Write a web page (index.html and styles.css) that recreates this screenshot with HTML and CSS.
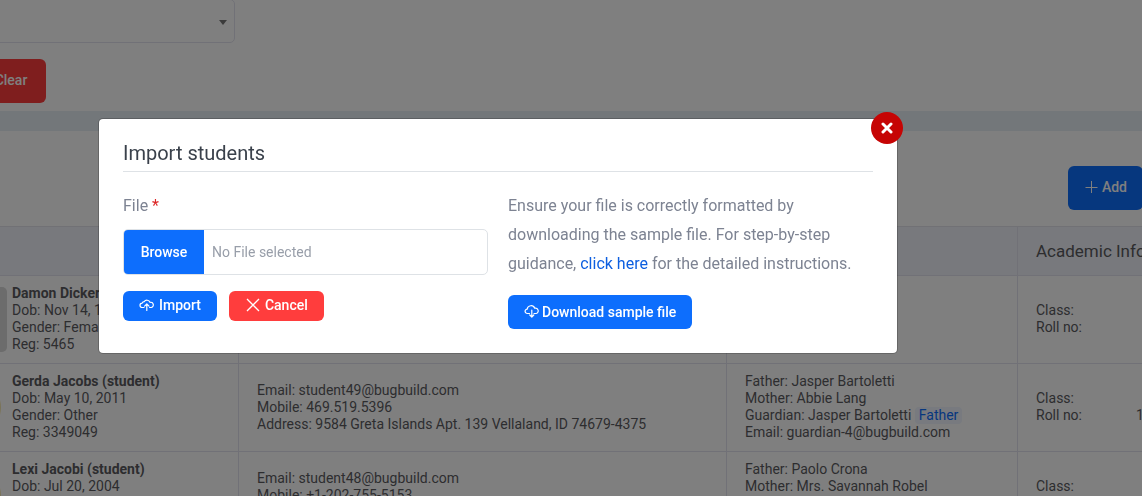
FILE: index.html
```html
<!DOCTYPE html>
<html lang="en">
<head>
    <meta charset="UTF-8">
    <meta name="viewport" content="width=device-width, initial-scale=1.0">
    <title>Students</title>
    <link rel="stylesheet" href="styles.css">
</head>
<body>
    <div class="page">
        <form class="filters">
            <div class="select-wrap">
                <select class="filter-select" aria-label="Filter">
                    <option></option>
                </select>
            </div>
            <button type="reset" class="btn btn-danger btn-clear">Clear</button>
        </form>

        <div class="card">
            <div class="toolbar">
                <button type="button" class="btn btn-primary btn-add">
                    <svg width="16" height="14" viewBox="0 0 16 14" fill="none" stroke="currentColor"><path d="M7.5 1v12M1.500 7.500h12"/></svg>
                    Add
                </button>
            </div>

            <table class="students">
                <colgroup>
                    <col class="col-student">
                    <col class="col-contact">
                    <col class="col-guardian">
                    <col>
                </colgroup>
                <thead>
                    <tr>
                        <th></th>
                        <th></th>
                        <th></th>
                        <th>Academic Info</th>
                    </tr>
                </thead>
                <tbody>
                    <tr>
                        <td>
                            <div class="student">
                                <span class="avatar avatar-square"></span>
                                <div><b>Damon Dicker</b><br>Dob: Nov 14, 1<br>Gender: Fema<br>Reg: 5465</div>
                            </div>
                        </td>
                        <td></td>
                        <td></td>
                        <td>
                            <dl class="academic"><dt>Class:</dt><dd></dd><dt>Roll no:</dt><dd></dd></dl>
                        </td>
                    </tr>
                    <tr>
                        <td>
                            <div class="student">
                                <span class="avatar"></span>
                                <div><b>Gerda Jacobs (student)</b><br>Dob: May 10, 2011<br>Gender: Other<br>Reg: 3349049</div>
                            </div>
                        </td>
                        <td>Email: student49@bugbuild.com<br>Mobile: 469.519.5396<br>Address: 9584 Greta Islands Apt. 139 Vellaland, ID 74679-4375</td>
                        <td>Father: Jasper Bartoletti<br>Mother: Abbie Lang<br>Guardian: Jasper Bartoletti <span class="badge">Father</span><br>Email: guardian-4@bugbuild.com</td>
                        <td>
                            <dl class="academic"><dt>Class:</dt><dd></dd><dt>Roll no:</dt><dd>1</dd></dl>
                        </td>
                    </tr>
                    <tr>
                        <td>
                            <div class="student">
                                <span class="avatar"></span>
                                <div><b>Lexi Jacobi (student)</b><br>Dob: Jul 20, 2004<br><br><br></div>
                            </div>
                        </td>
                        <td>Email: student48@bugbuild.com<br>Mobile: +1-202-755-5153<br><br></td>
                        <td>Father: Paolo Crona<br>Mother: Mrs. Savannah Robel<br><br><br></td>
                        <td>
                            <dl class="academic"><dt>Class:</dt><dd></dd><dt></dt><dd></dd></dl>
                        </td>
                    </tr>
                </tbody>
            </table>
        </div>
    </div>

    <div class="backdrop">
        <div class="modal" role="dialog" aria-labelledby="modalTitle">
            <button type="button" class="modal-close" aria-label="Close">
                <svg width="12" height="12" viewBox="0 0 12 12" fill="none" stroke="currentColor" stroke-width="3" stroke-linecap="round"><path d="M2 2l8 8M10 2l-8 8"/></svg>
            </button>
            <h1 class="modal-title" id="modalTitle">Import students</h1>
            <div class="modal-body">
                <form class="import-form">
                    <label class="field-label" for="importFile">File <span class="required">*</span></label>
                    <div class="file-box">
                        <span class="file-browse">Browse</span>
                        <span class="file-name">No File selected</span>
                        <input type="file" id="importFile" class="file-input">
                    </div>
                    <div class="actions">
                        <button type="submit" class="btn btn-primary btn-sm">
                            <svg width="16" height="14" viewBox="0 0 16 14" fill="none" stroke="currentColor" stroke-width="1.2" stroke-linecap="round" stroke-linejoin="round"><path d="M5 9.500H3.200A2.200 2.200 0 0 1 3.200 5.100 2.300 2.300 0 0 1 5.200 3.600 3.300 3.300 0 0 1 11 4.400 2.600 2.600 0 0 1 12.400 9.500H10.600M7.800 12.500V6.200M5.600 8.200L7.800 6l2.200 2.200"/></svg>
                            Import
                        </button>
                        <button type="button" class="btn btn-danger btn-sm">
                            <svg width="16" height="14" viewBox="0 0 16 14" fill="none" stroke="currentColor" stroke-width="1.3"><path d="M2 1l12 12M14 1L2 13"/></svg>
                            Cancel
                        </button>
                    </div>
                </form>
                <div class="help">
                    <p class="help-text">Ensure your file is correctly formatted by downloading the sample file. For step-by-step guidance, <a href="#">click here</a> for the detailed instructions.</p>
                    <button type="button" class="btn btn-primary btn-download">
                        <svg width="16" height="14" viewBox="0 0 16 14" fill="none" stroke="currentColor" stroke-width="1.2" stroke-linecap="round" stroke-linejoin="round"><path d="M5.500 8.500H3.400A2.200 2.200 0 0 1 3.200 4.100 3.900 3.900 0 0 1 10.700 3.200 2.700 2.700 0 0 1 12.200 8.500H10M7.800 5V11.500M5.800 10L7.800 12l2-2"/></svg>
                        Download sample file
                    </button>
                </div>
            </div>
        </div>
    </div>
</body>
</html>
```
FILE: styles.css
```css
* {
    box-sizing: border-box;
}
body {
    margin: 0;
    font-family: Roboto, sans-serif;
    font-size: 14px;
    line-height: 17px;
    color: #5b5b5f;
    background-color: #e6eef4;
    overflow: hidden;
}
.page {
    height: 100vh;
    margin: 0 -100px 0 -96px;
    overflow: hidden;
}
.filters {
    display: flex;
    flex-direction: column;
    align-items: flex-start;
    gap: 16px;
    margin-top: -1px;
    padding: 0 72px 8px;
    background: white;
}
.select-wrap {
    position: relative;
    width: 259px;
}
.select-wrap::after {
    content: "";
    position: absolute;
    top: 21px;
    right: 8px;
    border: 4px solid transparent;
    border-top: 5px solid #777;
    border-bottom: 0;
    pointer-events: none;
}
.filter-select {
    display: block;
    appearance: none;
    width: 100%;
    height: 44px;
    background: white;
    border: 1px solid #e3e3ee;
    border-radius: 5px;
}
.btn {
    display: inline-flex;
    align-items: center;
    justify-content: center;
    height: 44px;
    padding: 0 16px 2px;
    border: none;
    border-radius: 6px;
    font-family: inherit;
    font-size: 14px;
    font-weight: 500;
    color: white;
    cursor: pointer;
}
.btn-primary {
    background-color: #0d6efd;
}
.btn-danger {
    background-color: #ff3d3d;
}
.btn-clear {
    width: 70px;
}
.btn-add {
    gap: 2px;
}
.btn-sm {
    height: 30px;
    gap: 4px;
}
.btn-download {
    height: 34px;
    gap: 2px;
    padding-bottom: 0;
}
.card {
    margin-top: 20px;
    background: white;
}
.toolbar {
    display: flex;
    justify-content: flex-end;
    padding: 35px 99px 16px;
}
.students {
    width: 100%;
    table-layout: fixed;
    border-collapse: separate;
    border-spacing: 0;
    border-top: 1px solid #e3e3ea;
}
.col-student {
    width: 335px;
}
.col-contact {
    width: 488px;
}
.col-guardian {
    width: 291px;
}
.students th,
.students td {
    border-right: 1px solid #e3e3ee;
    border-bottom: 1px solid #e3e3ee;
    text-align: left;
    vertical-align: middle;
}
.students th {
    height: 49px;
    padding: 0 18px;
    background-color: #f0f3fa;
    font-size: 17px;
    font-weight: 400;
    white-space: nowrap;
}
.students td {
    height: 88px;
    padding: 9px 18px 10px;
}
.student {
    display: flex;
    align-items: center;
    gap: 5px;
    margin-left: 20px;
    white-space: nowrap;
}
.avatar {
    width: 65px;
    height: 65px;
    border: 6px solid white;
    border-radius: 50%;
    background-color: #f5e8b0;
}
.avatar-square {
    border: none;
    border-radius: 5px;
    background-color: #d8d8d8;
}
.badge {
    display: inline-block;
    padding: 0 4px;
    border-radius: 4px;
    background-color: #f0f5ff;
    color: #0d6efd;
}
.academic {
    display: grid;
    grid-template-columns: 100px 1fr;
    grid-auto-rows: 17px;
    margin: 0;
}
.academic dd {
    margin: 0;
}
.backdrop {
    position: fixed;
    inset: 0;
    padding: 118px 244px 0 98px;
    background-color: rgba(0, 0, 0, 0.5);
}
.modal {
    position: relative;
    padding: 22px 24px 24px;
    background: white;
    background-clip: padding-box;
    border: 1px solid rgba(0, 0, 0, 0.2);
    border-radius: 5px;
}
.modal-close {
    position: absolute;
    top: -7px;
    right: -6px;
    display: flex;
    align-items: center;
    justify-content: center;
    width: 32px;
    height: 32px;
    padding: 0;
    border: none;
    border-radius: 50%;
    background-color: #c60404;
    color: white;
    cursor: pointer;
}
.modal-title {
    margin: 0 0 19px;
    padding-bottom: 6px;
    border-bottom: 1px solid #dee2e6;
    font-size: 20px;
    font-weight: 400;
    line-height: 24px;
    color: #3a414b;
}
.modal-body {
    display: grid;
    grid-template-columns: 1fr 1fr;
    gap: 20px;
    font-size: 16px;
    line-height: 29px;
    color: #7d8392;
}
.field-label {
    display: block;
    margin-bottom: 9px;
}
.required {
    color: #dc2626;
}
.file-box {
    position: relative;
    display: flex;
    height: 46px;
    margin-bottom: 16px;
    border: 1px solid #dee2e6;
    border-radius: 5px;
    overflow: hidden;
    font-size: 14px;
    line-height: 44px;
}
.file-browse {
    width: 80px;
    background-color: #0d6efd;
    color: white;
    font-weight: 500;
    text-align: center;
}
.file-name {
    padding: 0 8px;
    color: #989ea9;
}
.file-input {
    position: absolute;
    inset: 0;
    width: 100%;
    height: 100%;
    opacity: 0;
    cursor: pointer;
}
.actions {
    display: flex;
    gap: 12px;
}
.help-text {
    margin: 0 0 17px;
}
.help-text a {
    color: #0d5fe0;
    text-decoration: none;
}
.help .btn {
    display: flex;
}
```
